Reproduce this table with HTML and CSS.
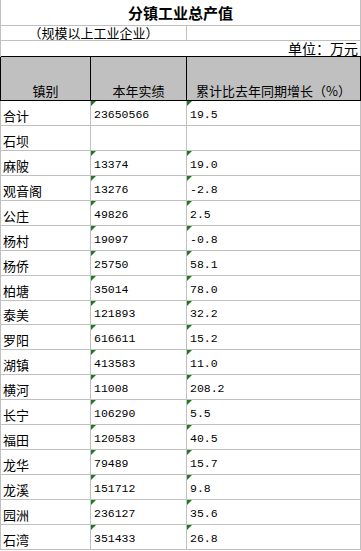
FILE: index.html
```html
<!DOCTYPE html>
<html lang="zh">
<head>
<meta charset="utf-8">
<link rel="stylesheet" href="styles.css">
</head>
<body>
<div class="sheet">
  <div class="row title-row"><div class="cell span3 title">分镇工业总产值</div></div>
  <div class="row sub-row">
    <div class="cell span2 center">（规模以上工业企业）</div>
    <div class="cell"></div>
  </div>
  <div class="row unit-row"><div class="cell span3 right">单位：万元</div></div>
  <div class="row head">
    <div class="cell center">镇别</div>
    <div class="cell center">本年实绩</div>
    <div class="cell center">累计比去年同期增长（%）</div>
  </div>
  <div class="row"><div class="cell">合计</div><div class="cell num t">23650566</div><div class="cell num t">19.5</div></div>
  <div class="row"><div class="cell">石坝</div><div class="cell num"></div><div class="cell num"></div></div>
  <div class="row"><div class="cell">麻陂</div><div class="cell num t">13374</div><div class="cell num t">19.0</div></div>
  <div class="row"><div class="cell">观音阁</div><div class="cell num t">13276</div><div class="cell num t">-2.8</div></div>
  <div class="row"><div class="cell">公庄</div><div class="cell num t">49826</div><div class="cell num t">2.5</div></div>
  <div class="row"><div class="cell">杨村</div><div class="cell num t">19097</div><div class="cell num t">-0.8</div></div>
  <div class="row"><div class="cell">杨侨</div><div class="cell num t">25750</div><div class="cell num t">58.1</div></div>
  <div class="row"><div class="cell">柏塘</div><div class="cell num t">35014</div><div class="cell num t">78.0</div></div>
  <div class="row"><div class="cell">泰美</div><div class="cell num t">121893</div><div class="cell num t">32.2</div></div>
  <div class="row"><div class="cell">罗阳</div><div class="cell num t">616611</div><div class="cell num t">15.2</div></div>
  <div class="row"><div class="cell">湖镇</div><div class="cell num t">413583</div><div class="cell num t">11.0</div></div>
  <div class="row"><div class="cell">横河</div><div class="cell num t">11008</div><div class="cell num t">208.2</div></div>
  <div class="row"><div class="cell">长宁</div><div class="cell num t">106290</div><div class="cell num t">5.5</div></div>
  <div class="row"><div class="cell">福田</div><div class="cell num t">120583</div><div class="cell num t">40.5</div></div>
  <div class="row"><div class="cell">龙华</div><div class="cell num t">79489</div><div class="cell num t">15.7</div></div>
  <div class="row"><div class="cell">龙溪</div><div class="cell num t">151712</div><div class="cell num t">9.8</div></div>
  <div class="row"><div class="cell">园洲</div><div class="cell num t">236127</div><div class="cell num t">35.6</div></div>
  <div class="row"><div class="cell">石湾</div><div class="cell num t">351433</div><div class="cell num t">26.8</div></div>
</div>
</body>
</html>
```

FILE: styles.css
```css
html, body {
  margin: 0;
  padding: 0;
  background: #ffffff;
}

.sheet {
  width: 361px;
  box-sizing: border-box;
  border-left: 1px solid #c0c0c0;
  font-family: "Noto Sans CJK SC", sans-serif;
  font-size: 13px;
  color: #000000;
}

.row {
  display: grid;
  grid-template-columns: 90px 96px 174px;
  height: 24.94px;
  box-sizing: border-box;
}

.cell {
  position: relative;
  box-sizing: border-box;
  border-right: 1px solid #c0c0c0;
  border-bottom: 1px solid #c0c0c0;
  display: flex;
  align-items: flex-end;
  padding: 0 2px 1px 2px;
  line-height: 16px;
  white-space: nowrap;
}

.span2 { grid-column: span 2; }
.span3 { grid-column: span 3; }

.center { justify-content: center; }
.right { justify-content: flex-end; }

.title-row { height: 26px; }
.title {
  justify-content: center;
  align-items: center;
  font-weight: bold;
  font-size: 15px;
  padding-top: 1px;
}

.sub-row { height: 15px; }
.sub-row .cell { line-height: 14px; padding-bottom: 0; }

.unit-row { height: 15px; }
.unit-row .cell {
  border-bottom: none;
  font-size: 14px;
  line-height: 15px;
  padding: 0 2px 0 0;
}

.head {
  height: 45px;
  background: #c0c0c0;
  border-top: 1px solid #000000;
}
.head .cell {
  border-right: 1px solid #000000;
  border-bottom: 1px solid #000000;
  padding-bottom: 1px;
  line-height: 16px;
}
.head .cell:first-child {
  border-left: 1px solid #000000;
  margin-left: -1px;
  width: 91px;
}

.num {
  font-family: "Liberation Mono", monospace;
  font-size: 11.5px;
  padding-left: 3px;
  padding-bottom: 2px;
}

.t::before {
  content: "";
  position: absolute;
  top: 0;
  left: 0;
  border-top: 5px solid #217a21;
  border-right: 5px solid transparent;
}
```
